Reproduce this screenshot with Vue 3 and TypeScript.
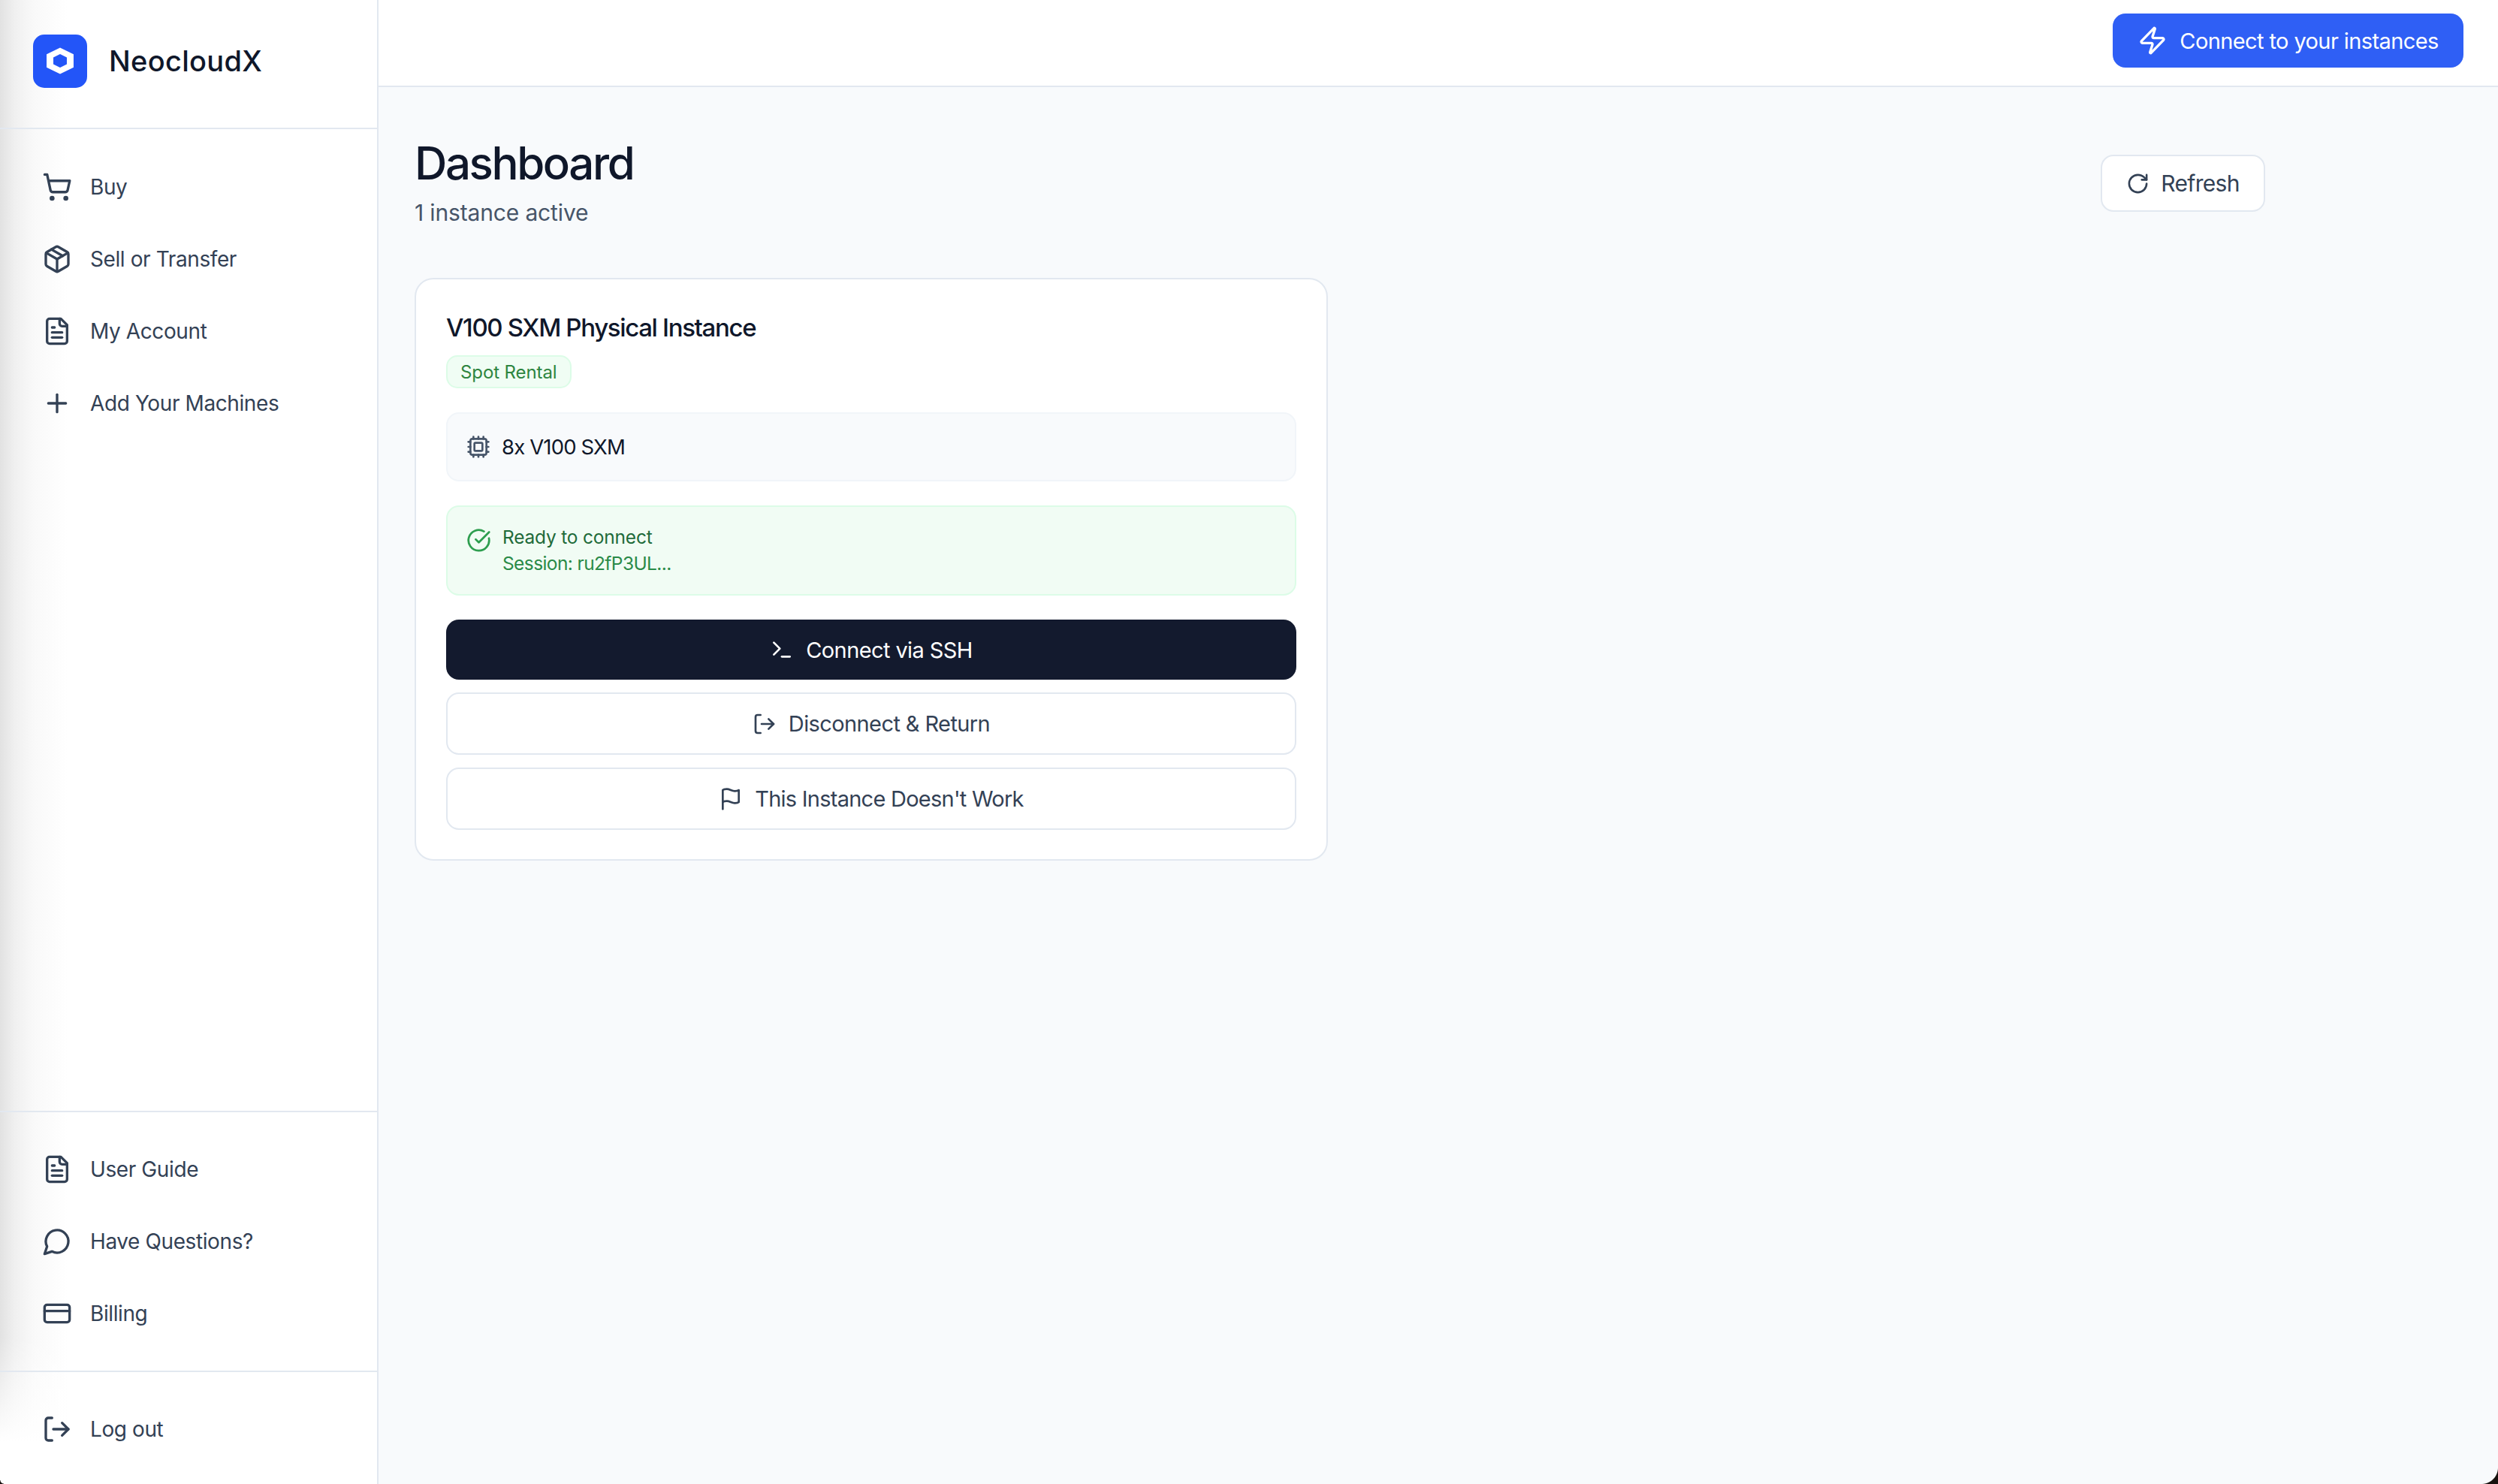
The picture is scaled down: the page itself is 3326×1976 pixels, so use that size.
<script setup lang="ts">
import { h } from 'vue'
import type { FunctionalComponent } from 'vue'

const paths: Record<string, string[]> = {
  cart: ['M8 20a1 1 0 1 0 0 2 1 1 0 0 0 0-2Z', 'M19 20a1 1 0 1 0 0 2 1 1 0 0 0 0-2Z', 'M2.05 2.05h2l2.66 12.42a2 2 0 0 0 2 1.58h9.78a2 2 0 0 0 1.95-1.57l1.65-7.43H5.12'],
  box: ['m7.5 4.27 9 5.15', 'M21 8a2 2 0 0 0-1-1.73l-7-4a2 2 0 0 0-2 0l-7 4A2 2 0 0 0 3 8v8a2 2 0 0 0 1 1.73l7 4a2 2 0 0 0 2 0l7-4A2 2 0 0 0 21 16Z', 'm3.3 7 8.7 5 8.7-5', 'M12 22V12'],
  doc: ['M15 2H6a2 2 0 0 0-2 2v16a2 2 0 0 0 2 2h12a2 2 0 0 0 2-2V7Z', 'M14 2v4a2 2 0 0 0 2 2h4', 'M10 9H8', 'M16 13H8', 'M16 17H8'],
  plus: ['M5 12h14', 'M12 5v14'],
  chat: ['M7.9 20A9 9 0 1 0 4 16.1L2 22Z'],
  card: ['M4 5h16a2 2 0 0 1 2 2v10a2 2 0 0 1-2 2H4a2 2 0 0 1-2-2V7a2 2 0 0 1 2-2Z', 'M2 10h20'],
  logout: ['M8 21H5a2 2 0 0 1-2-2V5a2 2 0 0 1 2-2h3', 'm16 17 5-5-5-5', 'M21 12H9'],
  zap: ['M4 14a1 1 0 0 1-.78-1.63l9.9-10.2a.5.5 0 0 1 .86.46l-1.92 6.02A1 1 0 0 0 13 10h7a1 1 0 0 1 .78 1.63l-9.9 10.2a.5.5 0 0 1-.86-.46l1.92-6.02A1 1 0 0 0 11 14z'],
  refresh: ['M21 12a9 9 0 1 1-9-9c2.52 0 4.93 1 6.74 2.74L21 8', 'M21 3v5h-5'],
  cpu: ['M12 20v2', 'M12 2v2', 'M17 20v2', 'M17 2v2', 'M2 12h2', 'M2 17h2', 'M2 7h2', 'M20 12h2', 'M20 17h2', 'M20 7h2', 'M7 20v2', 'M7 2v2', 'M6 4h12a2 2 0 0 1 2 2v12a2 2 0 0 1-2 2H6a2 2 0 0 1-2-2V6a2 2 0 0 1 2-2Z', 'M9 8h6a1 1 0 0 1 1 1v6a1 1 0 0 1-1 1H9a1 1 0 0 1-1-1V9a1 1 0 0 1 1-1Z'],
  check: ['M21.801 10A10 10 0 1 1 17 3.335', 'm9 11 3 3L22 4'],
  terminal: ['M12 19h8', 'm4 17 6-6-6-6'],
  flag: ['M4 15s1-1 4-1 5 2 8 2 4-1 4-1V3s-1 1-4 1-5-2-8-2-4 1-4 1z', 'M4 22v-7'],
}

const Icon: FunctionalComponent<{ name: string }> = (props) =>
  h(
    'svg',
    { viewBox: '0 0 24 24', fill: 'none', stroke: 'currentColor', 'stroke-width': 2, 'stroke-linecap': 'round', 'stroke-linejoin': 'round' },
    paths[props.name].map((d) => h('path', { d })),
  )
Icon.props = ['name']

const mainNav = [
  { icon: 'cart', label: 'Buy' },
  { icon: 'box', label: 'Sell or Transfer' },
  { icon: 'doc', label: 'My Account' },
  { icon: 'plus', label: 'Add Your Machines' },
]
const helpNav = [
  { icon: 'doc', label: 'User Guide' },
  { icon: 'chat', label: 'Have Questions?' },
  { icon: 'card', label: 'Billing' },
]
</script>

<template>
  <div class="app">
    <aside class="sidebar">
      <div class="brand">
        <span class="logo">
          <svg viewBox="0 0 24 24" class="logo-mark">
            <path d="M12 2.5l9.8 4.7v9.6L12 21.5l-9.8-4.7V7.2z" fill="#fff" />
            <path d="M12 7.1l4.9 2.4v5L12 16.9l-4.9-2.4v-5z" fill="#2355f8" />
          </svg>
        </span>
        <span class="brand-name">NeocloudX</span>
      </div>
      <nav class="nav nav-main">
        <a v-for="item in mainNav" :key="item.label" class="nav-item">
          <Icon :name="item.icon" class="nav-icon" />
          <span>{{ item.label }}</span>
        </a>
      </nav>
      <nav class="nav nav-help">
        <a v-for="item in helpNav" :key="item.label" class="nav-item">
          <Icon :name="item.icon" class="nav-icon" />
          <span>{{ item.label }}</span>
        </a>
      </nav>
      <nav class="nav nav-foot">
        <a class="nav-item">
          <Icon name="logout" class="nav-icon" />
          <span>Log out</span>
        </a>
      </nav>
    </aside>

    <div class="body">
      <header class="topbar">
        <button class="connect-all">
          <Icon name="zap" class="zap-icon" />
          <span>Connect to your instances</span>
        </button>
      </header>
      <main class="main">
        <div class="page-head">
          <div>
            <h1>Dashboard</h1>
            <p>1 instance active</p>
          </div>
          <button class="refresh">
            <Icon name="refresh" class="refresh-icon" />
            <span>Refresh</span>
          </button>
        </div>

        <section class="card">
          <h2>V100 SXM Physical Instance</h2>
          <span class="badge">Spot Rental</span>
          <div class="spec">
            <Icon name="cpu" class="btn-icon spec-icon" />
            <span>8x V100 SXM</span>
          </div>
          <div class="status">
            <Icon name="check" class="status-icon" />
            <div>
              <div class="status-title">Ready to connect</div>
              <div class="status-sub">Session: ru2fP3UL...</div>
            </div>
          </div>
          <div class="actions">
            <button class="action primary">
              <Icon name="terminal" class="btn-icon" />
              <span>Connect via SSH</span>
            </button>
            <button class="action">
              <Icon name="logout" class="btn-icon" />
              <span>Disconnect &amp; Return</span>
            </button>
            <button class="action">
              <Icon name="flag" class="btn-icon" />
              <span class="tight">This Instance Doesn't Work</span>
            </button>
          </div>
        </section>
      </main>
    </div>
  </div>
</template>

<style>
html,
body {
  margin: 0;
  background: #f8fafc;
}
</style>

<style scoped>
.app {
  position: relative;
  display: flex;
  height: 1976px;
  overflow: hidden;
  font-family: Inter, "Noto Sans", sans-serif;
  font-weight: 400;
  color: #0f172a;
}
.app::after {
  content: "";
  position: absolute;
  right: 0;
  bottom: 0;
  width: 22px;
  height: 22px;
  background: radial-gradient(circle at 0 0, transparent 21.5px, #17120f 22.5px);
}
.app::before {
  content: "";
  position: absolute;
  left: 0;
  bottom: 0;
  width: 5px;
  height: 5px;
  background: radial-gradient(circle at 100% 0, transparent 4px, #17120f 5px);
}
.sidebar {
  box-sizing: border-box;
  width: 504px;
  flex: none;
  display: flex;
  flex-direction: column;
  border-right: 2px solid #e2e8f0;
  background:
    linear-gradient(to bottom, rgba(255, 255, 255, 0) 1780px, #fff 1920px),
    linear-gradient(to right, #e2e2e2 0, #f0f0f0 20px, #f9f9f9 45px, #fff 90px);
}
.brand {
  box-sizing: border-box;
  height: 172px;
  padding: 0 0 8px 44px;
  display: flex;
  align-items: center;
  gap: 29px;
  border-bottom: 2px solid #e2e8f0;
}
.logo {
  width: 72px;
  height: 71px;
  border-radius: 15px;
  background: #2355f8;
  display: flex;
  align-items: center;
  justify-content: center;
}
.logo-mark {
  width: 44px;
  height: 44px;
}
.brand-name {
  font-size: 38px;
  font-weight: 500;
  letter-spacing: 0.3px;
}
.nav {
  display: flex;
  flex-direction: column;
}
.nav-main {
  flex: 1;
  padding-top: 29px;
}
.nav-help,
.nav-foot {
  border-top: 2px solid #e2e8f0;
  padding: 28px 0;
}
.nav-foot {
  padding-bottom: 25px;
}
.nav-item {
  height: 96px;
  display: flex;
  align-items: center;
  gap: 24px;
  padding-left: 56px;
  font-size: 28px;
  letter-spacing: -0.4px;
  color: #334155;
}
.nav-icon {
  width: 40px;
  height: 40px;
  flex: none;
}
.body {
  flex: 1;
  min-width: 0;
  display: flex;
  flex-direction: column;
  background: #f8fafc;
}
.topbar {
  box-sizing: border-box;
  height: 116px;
  flex: none;
  display: flex;
  align-items: flex-start;
  justify-content: flex-end;
  padding: 18px 46px 0 0;
  background: #fff;
  border-bottom: 2px solid #e2e8f0;
}
button {
  font-family: inherit;
  font-weight: inherit;
  cursor: pointer;
}
.connect-all {
  height: 72px;
  width: 467px;
  border: 0;
  border-radius: 17px;
  background: #2f5ff5;
  color: #fff;
  font-size: 29px;
  letter-spacing: -0.6px;
  display: flex;
  align-items: center;
  justify-content: center;
  gap: 16px;
}
.zap-icon {
  width: 40px;
  height: 40px;
  flex: none;
}
.main {
  padding: 66px 310px 0 48px;
}
.page-head {
  display: flex;
  justify-content: space-between;
  align-items: flex-start;
}
h1 {
  margin: 0;
  font-size: 60px;
  line-height: 71px;
  font-weight: 500;
  letter-spacing: -2.4px;
}
.page-head p {
  margin: 9px 0 0;
  font-size: 30px;
  line-height: 42px;
  color: #475569;
  letter-spacing: -0.15px;
}
.refresh {
  box-sizing: border-box;
  margin: 24px 0 0;
  width: 219px;
  height: 76px;
  border: 2px solid #e2e8f0;
  border-radius: 17px;
  background: #fff;
  color: #334155;
  font-size: 30px;
  display: flex;
  align-items: center;
  justify-content: center;
  gap: 15px;
  letter-spacing: -0.7px;
}
.refresh-icon {
  width: 31px;
  height: 31px;
  flex: none;
}
.btn-icon {
  width: 32px;
  height: 32px;
  flex: none;
}
.card {
  box-sizing: border-box;
  margin-top: 66px;
  width: 1216px;
  height: 776px;
  padding: 40px;
  background: #fff;
  border: 2px solid #e2e8f0;
  border-radius: 25px;
}
h2 {
  margin: 0;
  font-size: 33px;
  line-height: 48px;
  font-weight: 500;
  letter-spacing: -1.35px;
}
.badge {
  box-sizing: border-box;
  display: inline-flex;
  align-items: center;
  margin-top: 13px;
  height: 44px;
  padding: 0 17px;
  border: 2px solid #dcfce7;
  border-radius: 15px;
  background: #f0fdf4;
  color: #2e8540;
  font-size: 24px;
  letter-spacing: -0.1px;
}
.spec {
  box-sizing: border-box;
  margin-top: 32px;
  height: 92px;
  padding: 0 25px;
  display: flex;
  align-items: center;
  gap: 15px;
  border: 2px solid #f1f5f9;
  border-radius: 17px;
  background: #f8fafc;
  font-size: 27.5px;
  letter-spacing: -0.85px;
}
.spec-icon {
  color: #475569;
}
.status {
  box-sizing: border-box;
  margin-top: 32px;
  height: 120px;
  padding: 23px 25px;
  display: flex;
  align-items: flex-start;
  gap: 15px;
  border: 2px solid #dcfce7;
  border-radius: 17px;
  background: #f1fcf4;
  font-size: 24.5px;
  line-height: 35px;
  letter-spacing: -0.2px;
}
.status-icon {
  width: 33px;
  height: 33px;
  flex: none;
  margin-top: 5px;
  color: #2e9e4f;
}
.status-title {
  color: #1f6b3a;
}
.status-sub {
  color: #2a8a48;
  letter-spacing: -0.6px;
}
.actions {
  margin-top: 32px;
  display: flex;
  flex-direction: column;
  gap: 17px;
}
.action {
  box-sizing: border-box;
  height: 83px;
  border: 2px solid #e2e8f0;
  border-radius: 17px;
  background: #fff;
  color: #334155;
  font-size: 29px;
  letter-spacing: -0.6px;
  display: flex;
  align-items: center;
  justify-content: center;
  gap: 16px;
}
.action.primary {
  height: 80px;
  border: 0;
  background: #131a2e;
  color: #fff;
}
.tight {
  letter-spacing: -0.75px;
}
</style>
